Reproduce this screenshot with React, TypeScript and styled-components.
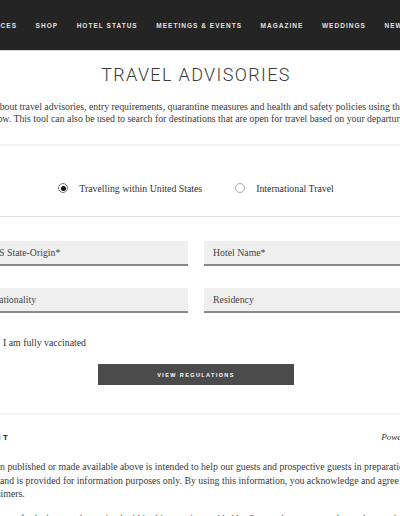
import React from "react";
import styled, { createGlobalStyle } from "styled-components";

const GlobalStyle = createGlobalStyle`
  html, body { margin: 0; padding: 0; background: #ffffff; }
  body { font-family: "Liberation Serif", serif; color: #333; }
`;

const Viewport = styled.div`
  width: 400px;
  height: 516px;
  overflow: hidden;
  background: #fff;
`;

const NavBar = styled.nav`
  height: 50px;
  background: #242424;
  border-bottom: 1px solid #d6d6d6;
  display: flex;
  align-items: center;
  overflow: hidden;
`;

const NavList = styled.ul`
  list-style: none;
  margin: 0 0 0 -40.5px;
  padding: 0;
  display: flex;
  gap: 18.5px;
  flex-shrink: 0;
`;

const NavItem = styled.li`
  font-family: "Liberation Sans", Arial, sans-serif;
  font-weight: 700;
  font-size: 6.5px;
  letter-spacing: 1.03px;
  color: #e2e2e2;
  white-space: nowrap;
`;

const Stage = styled.div`
  display: flex;
  justify-content: center;
  padding-right: 8px;
`;

const Wide = styled.main`
  width: 1000px;
  flex-shrink: 0;
  display: flex;
  flex-direction: column;
  align-items: center;
`;

const Title = styled.h1`
  margin: 14px 0 0;
  font-family: "Roboto", "Liberation Sans", sans-serif;
  font-weight: 300;
  font-size: 18px;
  line-height: 20px;
  letter-spacing: 1.35px;
  color: #3a3a3a;
  text-align: center;
`;

const Intro = styled.p`
  margin: 16px 0 0;
  width: 1000px;
  font-size: 9.8px;
  line-height: 12px;
  text-align: center;
  white-space: nowrap;
  color: #3a3a3a;
`;

const Card = styled.section`
  margin-top: 19px;
  width: 1000px;
  border-top: 2px solid #f3f3f3;
  border-bottom: 2px solid #f3f3f3;
  display: flex;
  flex-direction: column;
  align-items: center;
`;

const RadioRow = styled.div`
  width: 1000px;
  height: 71px;
  box-sizing: border-box;
  padding-top: 14px;
  border-bottom: 1px solid #e0e0e0;
  display: flex;
  justify-content: center;
  align-items: center;
  gap: 33px;
`;

const RadioOption = styled.label`
  display: flex;
  align-items: center;
  gap: 11px;
  font-size: 9.8px;
  color: #333;
  white-space: nowrap;
`;

const RadioCircle = styled.span<{ $checked?: boolean }>`
  width: 10px;
  height: 10px;
  box-sizing: border-box;
  border-radius: 50%;
  border: 1px solid ${(p) => (p.$checked ? "#777" : "#aaa")};
  display: flex;
  align-items: center;
  justify-content: center;
  &::after {
    content: "";
    width: 5px;
    height: 5px;
    border-radius: 50%;
    background: ${(p) => (p.$checked ? "#111" : "transparent")};
  }
`;

const Form = styled.div`
  width: 426px;
  padding: 24px 0 28px;
  display: flex;
  flex-direction: column;
`;

const FieldGrid = styled.div`
  display: grid;
  grid-template-columns: 1fr 1fr;
  column-gap: 16px;
  row-gap: 22px;
`;

const Field = styled.div`
  height: 23px;
  background: #efefef;
  border-bottom: 2px solid #8a8a8a;
  display: flex;
  align-items: center;
  padding-left: 9px;
  font-size: 9.8px;
  color: #444;
  white-space: nowrap;
`;

const CheckRow = styled.label`
  margin-top: 23px;
  display: flex;
  align-items: center;
  gap: 8px;
  font-size: 9.8px;
  color: #333;
`;

const CheckBox = styled.span`
  width: 10px;
  height: 10px;
  border: 1px solid #999;
`;

const Button = styled.button`
  align-self: center;
  margin-top: 16px;
  width: 196px;
  height: 21px;
  border: none;
  background: #4b4b4b;
  color: #fff;
  font-family: "Liberation Sans", Arial, sans-serif;
  font-weight: 700;
  font-size: 5.5px;
  letter-spacing: 1.4px;
  cursor: pointer;
`;

const Disclaimer = styled.section`
  width: 510px;
  padding-top: 17px;
`;

const DisclaimerHead = styled.div`
  display: flex;
  justify-content: space-between;
  align-items: baseline;
`;

const HeadLabel = styled.h2`
  margin: 0;
  font-family: "Liberation Sans", Arial, sans-serif;
  font-weight: 700;
  font-size: 8px;
  letter-spacing: 2.5px;
  color: #222;
`;

const PoweredBy = styled.span`
  margin-right: -7px;
  font-style: italic;
  font-size: 9px;
  color: #333;
`;

const Body = styled.p`
  margin: 18px 0 0;
  font-size: 9.8px;
  line-height: 13.5px;
  white-space: nowrap;
  color: #3a3a3a;
  & + & {
    margin-top: 11px;
  }
`;

const navItems = [
  "EXPERIENCES",
  "SHOP",
  "HOTEL STATUS",
  "MEETINGS & EVENTS",
  "MAGAZINE",
  "WEDDINGS",
  "NEWSROOM",
];

export default function App() {
  return (
    <>
      <GlobalStyle />
      <Viewport>
        <NavBar>
          <NavList>
            {navItems.map((n) => (
              <NavItem key={n}>{n}</NavItem>
            ))}
          </NavList>
        </NavBar>
        <Stage>
          <Wide>
            <Title>TRAVEL ADVISORIES</Title>
            <Intro>
              Learn about travel advisories, entry requirements, quarantine measures and health and safety policies using the tool
              <br />
              below. This tool can also be used to search for destinations that are open for travel based on your departure.
            </Intro>
            <Card>
              <RadioRow>
                <RadioOption>
                  <RadioCircle $checked />
                  Travelling within United States
                </RadioOption>
                <RadioOption>
                  <RadioCircle />
                  International Travel
                </RadioOption>
              </RadioRow>
              <Form>
                <FieldGrid>
                  <Field>US State-Origin*</Field>
                  <Field>Hotel Name*</Field>
                  <Field>Nationality</Field>
                  <Field>Residency</Field>
                </FieldGrid>
                <CheckRow>
                  <CheckBox />I am fully vaccinated
                </CheckRow>
                <Button>VIEW REGULATIONS</Button>
              </Form>
            </Card>
            <Disclaimer>
              <DisclaimerHead>
                <HeadLabel>IMPORTANT</HeadLabel>
                <PoweredBy>Powered by Smartvel</PoweredBy>
              </DisclaimerHead>
              <Body>
                The information published or made available above is intended to help our guests and prospective guests in preparation
                <br />
                for their travel and is provided for information purposes only. By using this information, you acknowledge and agree
                <br />
                to all the disclaimers.
              </Body>
              <Body>
                The information set forth above and contained within this page is provided by Smartvel, a company that gathers and
              </Body>
            </Disclaimer>
          </Wide>
        </Stage>
      </Viewport>
    </>
  );
}
